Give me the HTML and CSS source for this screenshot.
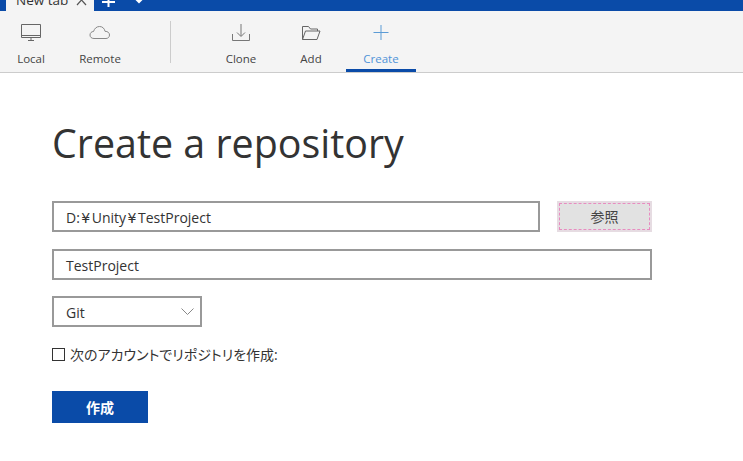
FILE: index.html
```html
<!DOCTYPE html>
<html lang="ja">
<head>
<meta charset="utf-8">
<title>Create a repository</title>
<link rel="stylesheet" href="styles.css">
</head>
<body>
<header class="tabbar">
  <div class="tab"><span class="tab-label">New tab</span>
    <svg class="tab-close" width="11" height="11" viewBox="0 0 11 11"><path d="M1 0l9 10M10 0L1 10" stroke="#555" stroke-width="1.2" fill="none"/></svg>
  </div>
  <svg class="tab-plus" width="16" height="11" viewBox="0 0 16 11"><path d="M7.500 0v7M1 2h13" stroke="#fff" stroke-width="2" fill="none"/></svg>
  <svg class="tab-drop" width="10" height="6" viewBox="0 0 10 6"><path d="M0.500 0h7L4 3.500z" fill="#fff"/></svg>
</header>
<nav class="toolbar">
  <div class="group group-left">
    <div class="tool tool-local">
      <svg width="22" height="20" viewBox="0 0 22 20"><path d="M1.500 1.500h19v13h-19zM1.500 12.500h19M8 17.500h6M11 15v2" stroke="#666" fill="none"/></svg>
      <span>Local</span>
    </div>
    <div class="tool tool-remote">
      <svg width="22" height="20" viewBox="0 0 22 20"><path d="M5 15.500C2.500 15.500 1 14 1 12c0-2 1.500-3.500 3.500-3.500C5.500 5.500 7.500 3.500 10.500 3.500c3 0 5 2 5.500 4.800 2.800 0 4.500 1.500 4.500 3.700 0 2-1.500 3.500-3.500 3.500z" stroke="#888" fill="none"/></svg>
      <span>Remote</span>
    </div>
  </div>
  <div class="divider"></div>
  <div class="group group-right">
    <div class="tool tool-clone">
      <svg width="20" height="20" viewBox="0 0 20 20"><path d="M10 1v12M6 9.500l4 4 4-4M1.500 11v6.500h17V11" stroke="#777" fill="none"/></svg>
      <span>Clone</span>
    </div>
    <div class="tool tool-add">
      <svg width="20" height="20" viewBox="0 0 20 20"><path d="M1.500 16.500V3.500h6l2 2.500h7v2M1.500 16.500h14.500l3-8.500H4.500z" stroke="#666" fill="none"/></svg>
      <span>Add</span>
    </div>
    <div class="tool tool-create is-active">
      <svg width="16" height="20" viewBox="0 0 16 20"><path d="M8 2v15M0.500 9.500h15" stroke="#5b9bd5" fill="none"/></svg>
      <span>Create</span>
    </div>
  </div>
</nav>
<main class="content">
  <h1 class="title">Create a repository</h1>
  <div class="row-path">
    <div class="field field-path">D:<span class="yen">¥</span>Unity<span class="yen">¥</span>TestProject</div>
    <button class="browse"><span class="browse-inner">参照</span></button>
  </div>
  <div class="field field-name">TestProject</div>
  <div class="field select"><span class="select-value">Git</span>
    <svg width="13" height="7" viewBox="0 0 13 7"><path d="M0.500 0.500l6 6 6-6" stroke="#888" fill="none"/></svg>
  </div>
  <label class="check"><span class="box"></span><span class="check-text">次のアカウントでリポジトリを作成:</span></label>
  <button class="primary">作成</button>
</main>
</body>
</html>
```

FILE: styles.css
```css
* { box-sizing: border-box; }
html, body { margin: 0; padding: 0; }
body {
  width: 743px;
  height: 461px;
  overflow: hidden;
  background: #fff;
  color: #333;
  font-family: "Open Sans", "Noto Sans CJK JP", sans-serif;
}
.tabbar {
  height: 11px;
  background: #0a4ba8;
  display: flex;
  align-items: flex-end;
  overflow: hidden;
}
.tab {
  width: 88px;
  margin-left: 6px;
  height: 11px;
  background: #f4f4f4;
  display: flex;
  align-items: flex-end;
  overflow: hidden;
}
.tab-label {
  font-size: 13.5px;
  line-height: 18px;
  height: 18px;
  margin-left: 10px;
  margin-bottom: 2px;
  white-space: nowrap;
  flex: none;
  color: #333;
}
.tab-close { margin: 0 0 5px 8px; flex: none; }
.tab-plus { margin: 0 0 0 7px; flex: none; }
.tab-drop { margin: 0 0 5px 18px; flex: none; }
.toolbar {
  height: 62px;
  background: #f4f4f4;
  border-bottom: 1px solid #ccc;
  display: flex;
  align-items: stretch;
}
.group { display: flex; }
.group-left { width: 170px; padding-left: 7px; }
.group-right { margin-left: 40px; }
.divider {
  width: 1px;
  background: #ccc;
  margin: 10px 0 9px;
}
.tool {
  display: flex;
  flex-direction: column;
  align-items: center;
  font-size: 11.5px;
  color: #444;
  padding-top: 12px;
  height: 61px;
}
.tool svg { height: 20px; display: block; }
.tool span { margin-top: 7px; line-height: 17px; }
.tool-local { width: 48px; }
.tool-remote { width: 62px; margin-left: 14px; }
.tool-clone { width: 60px; }
.tool-add { width: 60px; margin-left: 10px; }
.tool-create { width: 70px; margin-left: 5px; }
.is-active { color: #4f93d8; border-bottom: 3px solid #0a4ba8; }
.content { padding: 0 0 0 52px; }
.title {
  margin: 43px 0 0;
  font-size: 39.4px;
  font-weight: 400;
  line-height: 54px;
  height: 54px;
  color: #333;
}
.field {
  height: 31px;
  border: 2px solid #999;
  background: #fff;
  font-size: 14px;
  line-height: 29px;
  padding-left: 12px;
  color: #333;
}
.yen { padding: 0 1.5px; font-family: "DejaVu Sans", sans-serif; }
.row-path { display: flex; margin-top: 31px; }
.field-path { width: 488px; }
.browse {
  width: 95px;
  height: 31px;
  margin-left: 17px;
  padding: 2px;
  border: 0;
  background: #e6dce2;
  font: inherit;
}
.browse-inner {
  display: block;
  height: 27px;
  line-height: 25px;
  border: 1px dashed #e88cc0;
  background: #e2e2e2;
  font-size: 14px;
  color: #444;
  text-align: center;
}
.field-name { width: 600px; margin-top: 17px; }
.select {
  width: 150px;
  margin-top: 16px;
  display: flex;
  align-items: center;
  justify-content: space-between;
  padding-right: 6px;
}
.select-value { padding-top: 2px; }
.check {
  display: flex;
  align-items: center;
  margin-top: 17px;
  height: 20px;
  font-size: 14px;
  color: #333;
}
.box {
  width: 13px;
  height: 13px;
  border: 1px solid #333;
  background: #fff;
  margin-right: 5px;
}
.check-text { font-feature-settings: "palt"; }
.primary {
  display: block;
  width: 96px;
  height: 32px;
  margin-top: 27px;
  border: 0;
  background: #0a4ba8;
  color: #fff;
  font: inherit;
  font-size: 14px;
  font-weight: 700;
}
```
